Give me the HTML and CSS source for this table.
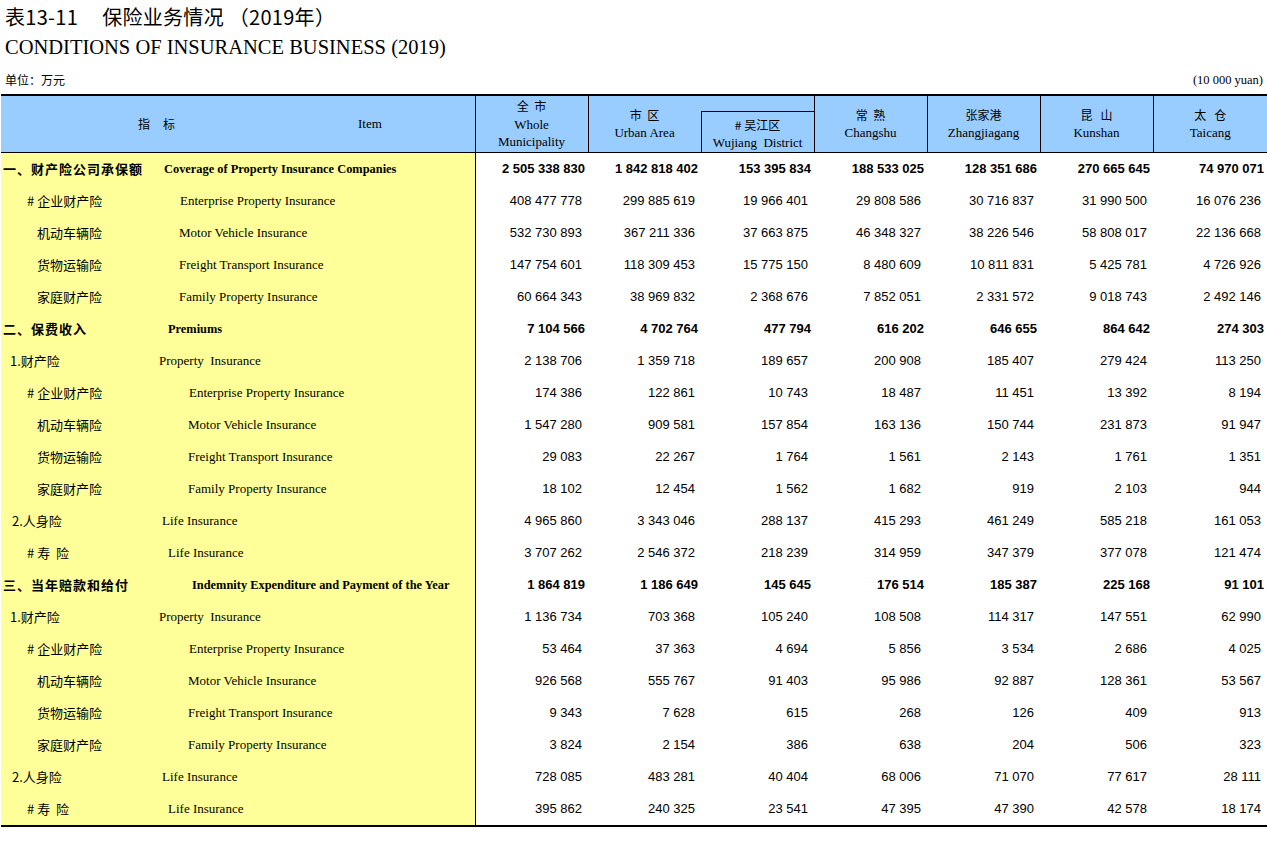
FILE: index.html
```html
<!DOCTYPE html>
<html lang="zh-CN">
<head>
<meta charset="utf-8">
<title>表13-11 保险业务情况（2019年）</title>
<link rel="stylesheet" href="styles.css">
</head>
<body>
<header class="titles">
  <h1 class="title-zh">表13-11<span class="title-gap"></span>保险业务情况 （2019年）</h1>
  <h2 class="title-en">CONDITIONS OF INSURANCE BUSINESS (2019)</h2>
  <div class="unit-row">
    <span class="unit-zh">单位：万元</span>
    <span class="unit-en">(10 000 yuan)</span>
  </div>
</header>
<table class="stats">
  <colgroup>
    <col class="c-zh"><col class="c-en">
    <col class="c-num"><col class="c-num"><col class="c-num"><col class="c-num"><col class="c-num"><col class="c-num"><col class="c-last">
  </colgroup>
  <thead>
    <tr class="hr1">
      <th colspan="2" rowspan="2" class="hd-label"><div class="hd-label-in"><span class="hd-zh">指标</span><span class="hd-en">Item</span></div></th>
      <th rowspan="2" class="hd"><span class="zh">全&nbsp;&nbsp;市</span><br>Whole<br>Municipality</th>
      <th rowspan="2" class="hd hd-urban"><span class="zh">市&nbsp;&nbsp;区</span><br>Urban Area</th>
      <th class="hd hd-blank"></th>
      <th rowspan="2" class="hd"><span class="zh">常&nbsp;&nbsp;熟</span><br>Changshu</th>
      <th rowspan="2" class="hd"><span class="zh">张家港</span><br>Zhangjiagang</th>
      <th rowspan="2" class="hd"><span class="zh">昆&nbsp;&nbsp;&nbsp;山</span><br>Kunshan</th>
      <th rowspan="2" class="hd hd-last"><span class="zh">太&nbsp;&nbsp;&nbsp;仓</span><br>Taicang</th>
    </tr>
    <tr class="hr2">
      <th class="hd hd-wujiang"><span class="zh"># 吴江区</span><br>Wujiang&nbsp; District</th>
    </tr>
  </thead>
  <tbody>
    <tr class="sec"><td class="zh-l i3">一、财产险公司承保额</td><td class="en-l e8">Coverage of Property Insurance Companies</td><td>2 505 338 830</td><td>1 842 818 402</td><td>153 395 834</td><td>188 533 025</td><td>128 351 686</td><td>270 665 645</td><td>74 970 071</td></tr>
    <tr><td class="zh-l i27"># 企业财产险</td><td class="en-l e24">Enterprise Property Insurance</td><td>408 477 778</td><td>299 885 619</td><td>19 966 401</td><td>29 808 586</td><td>30 716 837</td><td>31 990 500</td><td>16 076 236</td></tr>
    <tr><td class="zh-l i37">机动车辆险</td><td class="en-l e23">Motor Vehicle Insurance</td><td>532 730 893</td><td>367 211 336</td><td>37 663 875</td><td>46 348 327</td><td>38 226 546</td><td>58 808 017</td><td>22 136 668</td></tr>
    <tr><td class="zh-l i37">货物运输险</td><td class="en-l e23">Freight Transport Insurance</td><td>147 754 601</td><td>118 309 453</td><td>15 775 150</td><td>8 480 609</td><td>10 811 831</td><td>5 425 781</td><td>4 726 926</td></tr>
    <tr><td class="zh-l i37">家庭财产险</td><td class="en-l e23">Family Property Insurance</td><td>60 664 343</td><td>38 969 832</td><td>2 368 676</td><td>7 852 051</td><td>2 331 572</td><td>9 018 743</td><td>2 492 146</td></tr>
    <tr class="sec"><td class="zh-l i3">二、保费收入</td><td class="en-l e12">Premiums</td><td>7 104 566</td><td>4 702 764</td><td>477 794</td><td>616 202</td><td>646 655</td><td>864 642</td><td>274 303</td></tr>
    <tr><td class="zh-l i10">1.财产险</td><td class="en-l e3">Property&nbsp; Insurance</td><td>2 138 706</td><td>1 359 718</td><td>189 657</td><td>200 908</td><td>185 407</td><td>279 424</td><td>113 250</td></tr>
    <tr><td class="zh-l i27"># 企业财产险</td><td class="en-l e33">Enterprise Property Insurance</td><td>174 386</td><td>122 861</td><td>10 743</td><td>18 487</td><td>11 451</td><td>13 392</td><td>8 194</td></tr>
    <tr><td class="zh-l i37">机动车辆险</td><td class="en-l e32">Motor Vehicle Insurance</td><td>1 547 280</td><td>909 581</td><td>157 854</td><td>163 136</td><td>150 744</td><td>231 873</td><td>91 947</td></tr>
    <tr><td class="zh-l i37">货物运输险</td><td class="en-l e32">Freight Transport Insurance</td><td>29 083</td><td>22 267</td><td>1 764</td><td>1 561</td><td>2 143</td><td>1 761</td><td>1 351</td></tr>
    <tr><td class="zh-l i37">家庭财产险</td><td class="en-l e32">Family Property Insurance</td><td>18 102</td><td>12 454</td><td>1 562</td><td>1 682</td><td>919</td><td>2 103</td><td>944</td></tr>
    <tr><td class="zh-l i12">2.人身险</td><td class="en-l e6">Life Insurance</td><td>4 965 860</td><td>3 343 046</td><td>288 137</td><td>415 293</td><td>461 249</td><td>585 218</td><td>161 053</td></tr>
    <tr><td class="zh-l i27"># 寿&nbsp;&nbsp;险</td><td class="en-l e12">Life Insurance</td><td>3 707 262</td><td>2 546 372</td><td>218 239</td><td>314 959</td><td>347 379</td><td>377 078</td><td>121 474</td></tr>
    <tr class="sec"><td class="zh-l i3">三、当年赔款和给付</td><td class="en-l e36">Indemnity Expenditure and Payment of the Year</td><td>1 864 819</td><td>1 186 649</td><td>145 645</td><td>176 514</td><td>185 387</td><td>225 168</td><td>91 101</td></tr>
    <tr><td class="zh-l i10">1.财产险</td><td class="en-l e3">Property&nbsp; Insurance</td><td>1 136 734</td><td>703 368</td><td>105 240</td><td>108 508</td><td>114 317</td><td>147 551</td><td>62 990</td></tr>
    <tr><td class="zh-l i27"># 企业财产险</td><td class="en-l e33">Enterprise Property Insurance</td><td>53 464</td><td>37 363</td><td>4 694</td><td>5 856</td><td>3 534</td><td>2 686</td><td>4 025</td></tr>
    <tr><td class="zh-l i37">机动车辆险</td><td class="en-l e32">Motor Vehicle Insurance</td><td>926 568</td><td>555 767</td><td>91 403</td><td>95 986</td><td>92 887</td><td>128 361</td><td>53 567</td></tr>
    <tr><td class="zh-l i37">货物运输险</td><td class="en-l e32">Freight Transport Insurance</td><td>9 343</td><td>7 628</td><td>615</td><td>268</td><td>126</td><td>409</td><td>913</td></tr>
    <tr><td class="zh-l i37">家庭财产险</td><td class="en-l e32">Family Property Insurance</td><td>3 824</td><td>2 154</td><td>386</td><td>638</td><td>204</td><td>506</td><td>323</td></tr>
    <tr><td class="zh-l i12">2.人身险</td><td class="en-l e6">Life Insurance</td><td>728 085</td><td>483 281</td><td>40 404</td><td>68 006</td><td>71 070</td><td>77 617</td><td>28 111</td></tr>
    <tr class="last"><td class="zh-l i27"># 寿&nbsp;&nbsp;险</td><td class="en-l e12">Life Insurance</td><td>395 862</td><td>240 325</td><td>23 541</td><td>47 395</td><td>47 390</td><td>42 578</td><td>18 174</td></tr>
  </tbody>
</table>
</body>
</html>
```
FILE: styles.css
```css
html, body {
  margin: 0;
  padding: 0;
  background: #ffffff;
  color: #000000;
}
body {
  font-family: "Liberation Sans", Arial, sans-serif;
  width: 1267px;
}
.titles {
  padding-left: 5px;
  padding-right: 4px;
}
.title-zh {
  margin: 0;
  font-family: "Noto Sans CJK SC", sans-serif;
  font-weight: 400;
  font-size: 20px;
  line-height: 30px;
  height: 32px;
  padding-top: 2px;
  box-sizing: border-box;
  letter-spacing: 0.3px;
}
.title-gap {
  display: inline-block;
  width: 24px;
}
.title-en {
  margin: 0;
  font-family: "Liberation Serif", "Times New Roman", serif;
  font-weight: 400;
  font-size: 20.5px;
  line-height: 30px;
  height: 30px;
}
.unit-row {
  display: flex;
  justify-content: space-between;
  align-items: flex-end;
  height: 32px;
  padding-bottom: 6px;
  box-sizing: border-box;
}
.unit-zh {
  font-family: "Noto Sans CJK SC", sans-serif;
  font-size: 12px;
  line-height: 16px;
}
.unit-en {
  font-family: "Liberation Serif", "Times New Roman", serif;
  font-size: 12.5px;
  line-height: 16px;
}
.stats {
  margin-left: 1px;
  width: 1266px;
  table-layout: fixed;
  border-collapse: collapse;
  border-top: 2px solid #000;
  border-bottom: 2px solid #000;
}
.c-zh { width: 155px; }
.c-en { width: 319px; }
.c-num { width: 113px; }
.c-last { width: 114px; }
.stats th {
  background: #99ccff;
  font-family: "Liberation Serif", "Times New Roman", serif;
  font-weight: 400;
  font-size: 13px;
  line-height: 17.5px;
  padding: 0;
  text-align: center;
  vertical-align: middle;
  border-bottom: 1px solid #000;
}
.stats th .zh {
  font-family: "Noto Sans CJK SC", sans-serif;
  font-size: 12px;
}
.hr1 { height: 16px; }
.hr2 { height: 40px; }
.hd {
  border-left: 1px solid #000;
}
.stats th.hd-blank {
  border-left: none;
  border-right: 1px solid #000;
}
.stats th.hd-wujiang {
  border-left: 1px solid #000;
  border-right: 1px solid #000;
  padding-top: 4px;
}
.hd-label {
  border-right: 1px solid #000;
}
.hd-label-in {
  display: flex;
  align-items: center;
}
.hd-zh {
  width: 357px;
  box-sizing: border-box;
  padding-left: 137px;
  text-align: left;
  font-family: "Noto Sans CJK SC", sans-serif;
  font-size: 12px;
  letter-spacing: 13px;
}
.hd-en {
  font-family: "Liberation Serif", "Times New Roman", serif;
  font-size: 13px;
}
.stats td {
  height: 32px;
  padding: 0 6px 0 0;
  text-align: right;
  vertical-align: middle;
  font-family: "Liberation Sans", Arial, sans-serif;
  font-size: 13px;
  white-space: nowrap;
  overflow: hidden;
}
.stats td.zh-l,
.stats td.en-l {
  background: #ffff99;
  text-align: left;
  padding-right: 0;
}
.stats td.zh-l {
  font-family: "Noto Sans CJK SC", sans-serif;
  font-size: 13px;
}
.stats td.en-l {
  font-family: "Liberation Serif", "Times New Roman", serif;
  font-size: 13px;
  border-right: 1px solid #000;
}
.stats .sec td {
  font-weight: 700;
  padding-right: 3px;
}
.stats .sec td.zh-l {
  letter-spacing: 1px;
  font-size: 13px;
  padding-right: 0;
}
.stats .sec td.en-l {
  padding-right: 0;
  padding-top: 2px;
  height: 30px;
  font-size: 12.4px;
}
.stats td.i3 { padding-left: 2px; }
.stats td.i10 { padding-left: 9px; }
.stats td.i12 { padding-left: 11px; }
.stats td.i27 { padding-left: 26px; }
.stats td.i37 { padding-left: 36px; }
.stats td.e3 { padding-left: 3px; }
.stats td.e6 { padding-left: 6px; }
.stats td.e8 { padding-left: 8px; }
.stats td.e12 { padding-left: 12px; }
.stats td.e23 { padding-left: 23px; }
.stats td.e24 { padding-left: 24px; }
.stats td.e32 { padding-left: 32px; }
.stats td.e33 { padding-left: 33px; }
.stats td.e36 { padding-left: 36px; }
```
